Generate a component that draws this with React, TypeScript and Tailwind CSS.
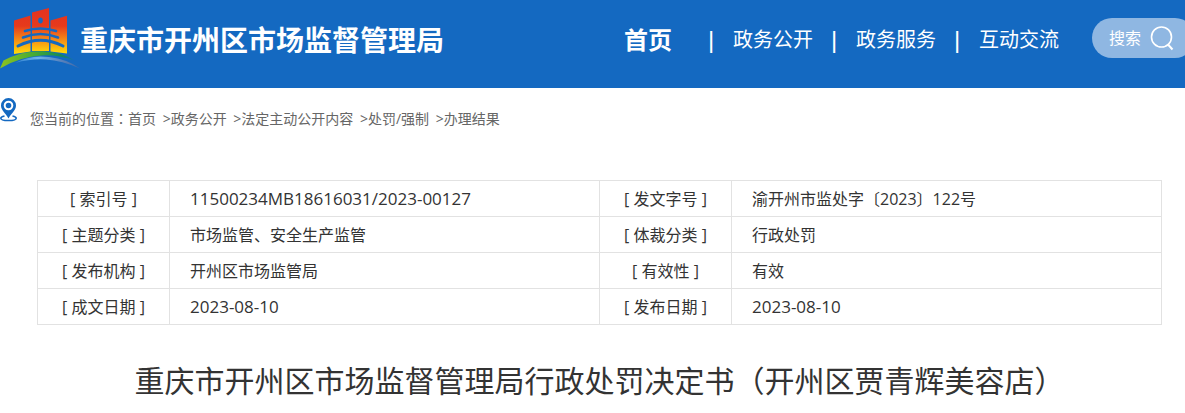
const navItems = ["政务公开", "政务服务", "互动交流"];

const crumbs = ["首页", "政务公开", "法定主动公开内容", "处罚/强制", "办理结果"];

const rows = [
  ["[ 索引号 ]", "11500234MB18616031/2023-00127", "[ 发文字号 ]", "渝开州市监处字〔2023〕122号"],
  ["[ 主题分类 ]", "市场监管、安全生产监管", "[ 体裁分类 ]", "行政处罚"],
  ["[ 发布机构 ]", "开州区市场监管局", "[ 有效性 ]", "有效"],
  ["[ 成文日期 ]", "2023-08-10", "[ 发布日期 ]", "2023-08-10"],
];

const isCode = (text: string) => /^[\w/-]+$/.test(text);

function Logo() {
  return (
    <svg className="h-[72px] w-20 shrink-0" viewBox="0 0 80 72" aria-hidden="true">
      <defs>
        <linearGradient id="tower" gradientUnits="userSpaceOnUse" x1="0" y1="8" x2="0" y2="53">
          <stop offset="0" stopColor="#e2331f" />
          <stop offset="0.4" stopColor="#e63a1c" />
          <stop offset="0.7" stopColor="#f58a16" />
          <stop offset="1" stopColor="#ffd90a" />
        </linearGradient>
        <linearGradient id="hill" x1="0" y1="0" x2="1" y2="0">
          <stop offset="0" stopColor="#8fc31f" />
          <stop offset="0.45" stopColor="#45ab35" />
          <stop offset="0.8" stopColor="#178a55" />
          <stop offset="1" stopColor="#1469c1" />
        </linearGradient>
        <linearGradient id="river" x1="0" y1="0" x2="1" y2="0">
          <stop offset="0" stopColor="#2f80d0" />
          <stop offset="0.35" stopColor="#6db4ea" />
          <stop offset="0.7" stopColor="#5a83bd" />
          <stop offset="1" stopColor="#3f68a8" />
        </linearGradient>
      </defs>
      <g fill="url(#tower)">
        <path d="M14 20.5 30.5 15.5V51.5L14 54Z" />
        <path d="M32 12.5 49 8V51H32Z" />
        <path d="M50.5 20.5 67 15.7V53.5L50.5 51.5Z" />
      </g>
      <ellipse cx="40.5" cy="20.5" rx="2.3" ry="3" fill="#1469c1" />
      <g fill="none" stroke="#1469c1" strokeLinecap="round">
        <path d="M25 31Q40.5 26 56 31" strokeWidth="2.600" />
        <path d="M23 37.5Q40.5 30.5 58 37.5" strokeWidth="2.600" />
        <path d="M18 46Q40.5 34.5 63 46" strokeWidth="3" />
      </g>
      <path d="M0 68.5 3.5 60.5Q22 50.5 43 51.2Q62 52 76 61Q58 54.5 42 55.5Q20 56.5 0 68.5Z" fill="url(#hill)" />
      <path d="M15 63Q30 54.5 49 57Q67 59 80 68.5Q62 60.5 46 59.5Q31 58.5 15 63Z" fill="url(#river)" />
    </svg>
  );
}

function PinIcon() {
  return (
    <svg className="h-6 w-[18px] shrink-0" viewBox="0 0 18 24" aria-hidden="true">
      <path
        d="M8.500 0a7.500 7.500 0 0 0-7.500 7.500C1 12.500 5.500 15 8.500 20.500C11.500 15 16 12.500 16 7.500A7.500 7.500 0 0 0 8.500 0Z"
        fill="#1469c1"
      />
      <circle cx="8.500" cy="7.500" r="3.800" fill="none" stroke="#fff" strokeWidth="2" />
      <path
        d="M4.500 18C2 18.500.800 19.200.800 20.200C.800 21.800 4.300 22.500 8.500 22.500S16.200 21.800 16.200 20.200C16.200 19.200 15 18.500 12.500 18"
        fill="none"
        stroke="#1469c1"
        strokeWidth="1.600"
      />
    </svg>
  );
}

export default function App() {
  return (
    <div className="overflow-hidden bg-white font-['Open_Sans','Noto_Sans_CJK_SC',sans-serif] text-[#333]">
      <div className="min-w-[1200px]">
        <header className="flex h-[88px] items-start justify-between bg-[#1469c1] pr-[5px] text-white">
          <div className="flex items-start">
            <Logo />
            <span className="text-[28px] leading-20 font-bold">重庆市开州区市场监督管理局</span>
          </div>
          <div className="flex h-[76px] items-center">
            <nav className="flex items-center pt-1">
              <a href="#" className="mr-9 text-2xl font-bold">首页</a>
              {navItems.map((item) => (
                <div key={item} className="flex items-center">
                  <span className="w-[7px] font-['Liberation_Sans',sans-serif] text-2xl">|</span>
                  <a href="#" className="mx-[18px] text-xl">{item}</a>
                </div>
              ))}
            </nav>
            <button className="ml-[15px] flex h-10 items-center gap-2 rounded-full bg-[#8fb7e2] pr-5 pl-[17px] text-base">
              搜索
              <svg className="size-[26px]" viewBox="0 0 26 26" fill="none" stroke="#fff" strokeWidth="1.600" aria-hidden="true">
                <circle cx="12.500" cy="12" r="10" />
                <path d="M19 19.500 23.500 24.500" strokeWidth="2" />
              </svg>
            </button>
          </div>
        </header>

        <div className="flex pt-2.5">
          <PinIcon />
          <nav className="ml-3 pt-2.5 text-sm text-[#666]">
            您当前的位置<span lang="zh-TW" className="font-['Noto_Sans_CJK_TC',sans-serif]">：</span>
            {crumbs.map((crumb, i) => (
              <span key={crumb}>
                {i > 0 && <span className="pl-[3px]"> &gt;</span>}
                <a href="#">{crumb}</a>
              </span>
            ))}
          </nav>
        </div>

        <main className="pr-[38px] pl-[37px]">
          <table className="mt-[51px] w-full table-fixed border-collapse text-base">
            <colgroup>
              <col className="w-[132px]" />
              <col />
              <col className="w-[132px]" />
              <col />
            </colgroup>
            <tbody>
              {rows.map((row) => (
                <tr key={row[0]} className="h-9">
                  {row.map((cell, i) =>
                    i % 2 === 0 ? (
                      <th key={i} scope="row" className="border border-[#e2e2e2] text-center font-normal">
                        {cell}
                      </th>
                    ) : (
                      <td
                        key={i}
                        className={`border border-[#e2e2e2] px-5 ${isCode(cell) ? "text-[17px]" : "text-base"}`}
                      >
                        {cell}
                      </td>
                    ),
                  )}
                </tr>
              ))}
            </tbody>
          </table>
          <h1 className="pt-8 pb-2 text-center text-3xl leading-12">
            重庆市开州区市场监督管理局行政处罚决定书（开州区贾青辉美容店）
          </h1>
        </main>
      </div>
    </div>
  );
}
